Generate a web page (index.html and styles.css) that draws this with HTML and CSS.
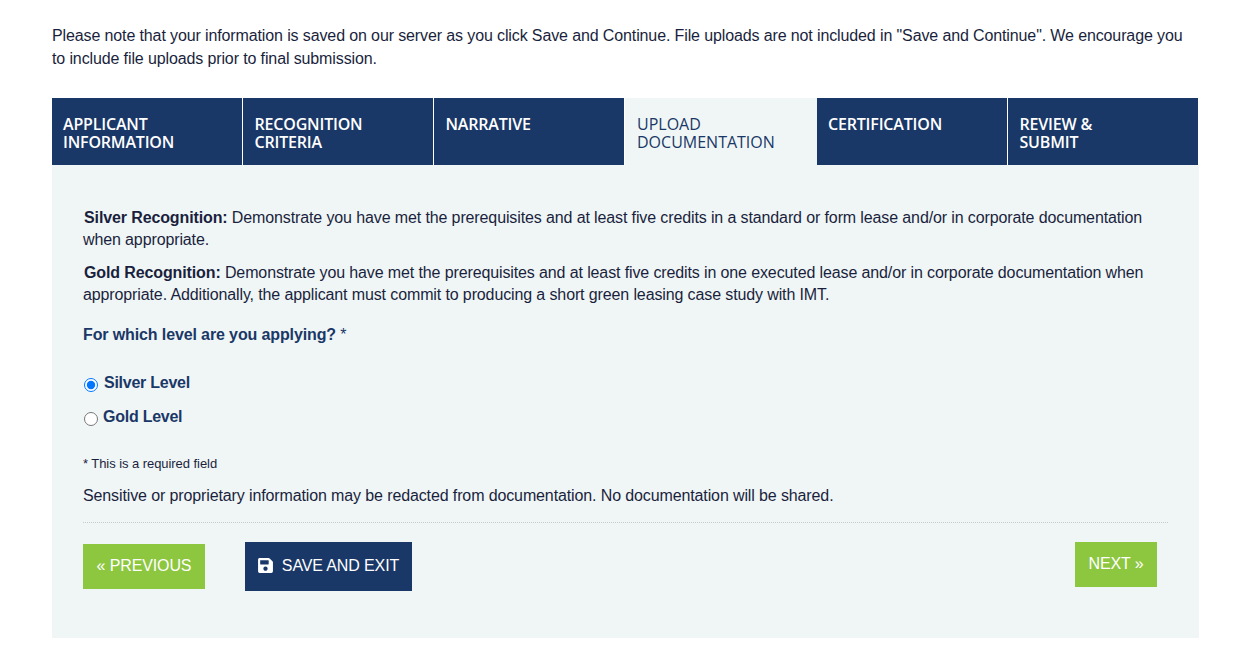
FILE: index.html
```html
<!DOCTYPE html>
<html lang="en">
<head>
<meta charset="utf-8">
<title>Upload Documentation</title>
<link rel="stylesheet" href="styles.css">
</head>
<body>
<main class="page">
  <p class="note">Please note that your information is saved on our server as you click Save and Continue. File uploads are not included in "Save and Continue". We encourage you to include file uploads prior to final submission.</p>
  <nav class="tabs">
    <a class="tab">APPLICANT INFORMATION</a>
    <a class="tab">RECOGNITION CRITERIA</a>
    <a class="tab">NARRATIVE</a>
    <a class="tab tab-active">UPLOAD DOCUMENTATION</a>
    <a class="tab">CERTIFICATION</a>
    <a class="tab tab-last">REVIEW &amp; SUBMIT</a>
  </nav>
  <section class="panel">
    <p class="desc"><strong>Silver Recognition:</strong> Demonstrate you have met the prerequisites and at least five credits in a standard or form lease and/or in corporate documentation when appropriate.</p>
    <p class="desc desc-gold"><strong>Gold Recognition:</strong> Demonstrate you have met the prerequisites and at least five credits in one executed lease and/or in corporate documentation when appropriate. Additionally, the applicant must commit to producing a short green leasing case study with IMT.</p>
    <p class="question"><strong>For which level are you applying?</strong> *</p>
    <label class="option option-silver"><input type="radio" name="level" checked><span>Silver Level</span></label>
    <label class="option option-gold"><input type="radio" name="level"><span>Gold Level</span></label>
    <p class="required">* This is a required field</p>
    <p class="sensitive">Sensitive or proprietary information may be redacted from documentation. No documentation will be shared.</p>
    <div class="actions">
      <button class="btn btn-green btn-prev" type="button">« PREVIOUS</button>
      <button class="btn btn-navy" type="button">
        <svg class="icon" viewBox="0 0 448 512" aria-hidden="true"><path fill="currentColor" d="M433.941 129.941l-83.882-83.882A48 48 0 0 0 316.118 32H48C21.49 32 0 53.49 0 80v352c0 26.51 21.49 48 48 48h352c26.51 0 48-21.49 48-48V163.882a48 48 0 0 0-14.059-33.941zM224 416c-35.346 0-64-28.654-64-64 0-35.346 28.654-64 64-64s64 28.654 64 64c0 35.346-28.654 64-64 64zm96-304.520V212c0 6.627-5.373 12-12 12H76c-6.627 0-12-5.373-12-12V108c0-6.627 5.373-12 12-12h228.520c3.183 0 6.235 1.264 8.485 3.515l3.480 3.480A11.996 11.996 0 0 1 320 111.480z"/></svg>
        SAVE AND EXIT
      </button>
      <button class="btn btn-green btn-next" type="button">NEXT »</button>
    </div>
  </section>
</main>
</body>
</html>
```

FILE: styles.css
```css
* { box-sizing: border-box; }

html, body {
  margin: 0;
  background: #fff;
}

body {
  font-family: "Liberation Sans", Arial, sans-serif;
  font-size: 16px;
  line-height: 23px;
  letter-spacing: -0.12px;
  color: #1a1f3d;
}

.page {
  width: 1147px;
  margin-left: 52px;
  padding-top: 24px;
}

p { margin: 0; }

.note {
  width: 1146px;
  height: 46px;
  margin-bottom: 28px;
}

.tabs {
  display: flex;
  width: 1146px;
  height: 67px;
}

.tab {
  width: 191px;
  padding: 17px 11px 0 11px;
  background: #1a3867;
  border-right: 1px solid #fff;
  font-family: "Open Sans", sans-serif;
  font-size: 16px;
  font-weight: 600;
  line-height: 18px;
  letter-spacing: -0.18px;
  color: #fff;
}

.tab-active {
  width: 192px;
  padding-left: 12px;
  padding-right: 30px;
  background: #f0f6f6;
  border-right: 0;
  font-weight: 400;
  letter-spacing: 0;
  color: #1a3867;
}

.tab:nth-child(2) { padding-left: 11.5px; padding-right: 40px; }
.tab:nth-child(3) { padding-left: 11.5px; }
.tab:nth-child(6) { padding-left: 11.5px; padding-right: 80px; }
.tab-last { border-right: 0; width: 190px; }

.panel {
  height: 473px;
  padding: 42px 31px 0;
  background: #f0f6f6;
}

.desc {
  line-height: 22px;
  text-indent: 1px;
}

.desc-gold {
  margin-top: 11px;
}

.question {
  margin-top: 17px;
  color: #1a3867;
}

.question strong { color: #1a3867; }

.option {
  display: flex;
  align-items: flex-start;
  font-weight: 700;
  letter-spacing: -0.25px;
  color: #1a3867;
}

.option input {
  width: 14px;
  height: 14px;
  margin: 7px 6px 0 1px;
  flex: none;
}

.option-silver { margin-top: 25px; }
.option-gold { margin-top: 11px; }

.option-gold input { margin-right: 5px; }

.required {
  margin-top: 27px;
  font-size: 13px;
  line-height: 18px;
  letter-spacing: -0.06px;
}

.sensitive {
  margin-top: 11px;
  height: 38px;
}

.actions {
  display: flex;
  align-items: flex-start;
  border-top: 1px dotted #c8c8c8;
  width: 1085px;
  padding-top: 19px;
}

.btn {
  border: 0;
  border-radius: 0;
  font-family: "Liberation Sans", Arial, sans-serif;
  font-size: 16px;
  letter-spacing: -0.12px;
  color: #fff;
  cursor: pointer;
  padding: 0;
}

.btn-green { background: #8dc63f; height: 45px; }

.btn-navy {
  display: flex;
  align-items: center;
  justify-content: center;
  gap: 9px;
  width: 167px;
  height: 49px;
  margin-left: 40px;
  padding-bottom: 2px;
  background: #1a3867;
}

.btn-prev { width: 122px; margin-top: 2px; padding-bottom: 2px; }
.btn-next { width: 82px; margin-left: auto; margin-right: 11px; padding-bottom: 1px; }

.icon { width: 15px; height: 17px; flex: none; }
```
